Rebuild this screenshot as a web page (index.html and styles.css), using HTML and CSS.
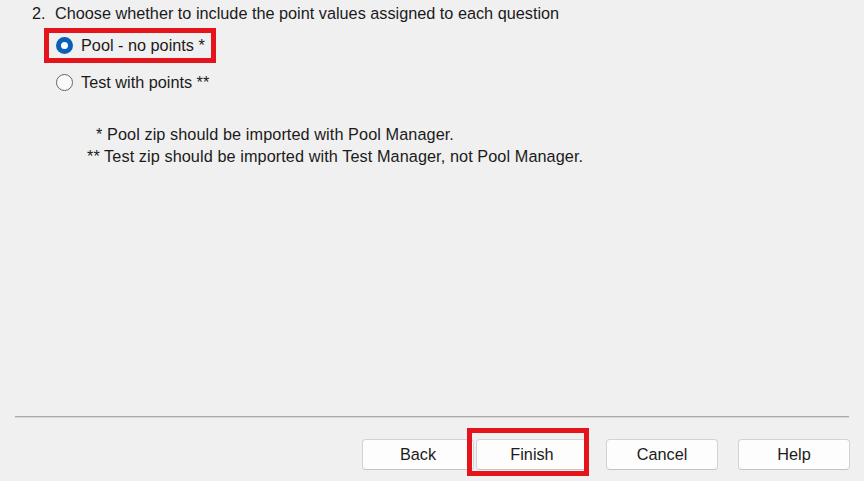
FILE: index.html
```html
<!DOCTYPE html>
<html lang="en">
<head>
<meta charset="utf-8">
<title>Export wizard</title>
<link rel="stylesheet" href="styles.css">
</head>
<body>
<div class="dialog">
  <div class="content">
    <div class="question"><span class="num">2.</span><span>Choose whether to include the point values assigned to each question</span></div>
    <div class="options">
      <label class="option highlighted"><span class="radio checked"></span><span>Pool - no points *</span></label>
      <label class="option"><span class="radio"></span><span>Test with points **</span></label>
    </div>
    <div class="notes">
      <div class="note note-one">* Pool zip should be imported with Pool Manager.</div>
      <div class="note note-two">** Test zip should be imported with Test Manager, not Pool Manager.</div>
    </div>
  </div>
  <div class="separator"></div>
  <div class="buttons">
    <button class="btn">Back</button>
    <button class="btn btn-finish">Finish<span class="mark"></span></button>
    <button class="btn btn-cancel">Cancel</button>
    <button class="btn btn-help">Help</button>
  </div>
</div>
</body>
</html>
```
FILE: styles.css
```css
html, body {
  margin: 0;
  padding: 0;
  background: #f0f0f0;
}
body {
  font-family: "Liberation Sans", Arial, sans-serif;
  font-size: 16.25px;
  color: #1b1b1b;
}
.dialog {
  height: 481px;
  display: flex;
  flex-direction: column;
}
.content {
  flex: 1;
  display: flex;
  flex-direction: column;
}
.question {
  display: flex;
  padding: 4px 0 0 32px;
  line-height: 19px;
}
.num {
  width: 23px;
}
.options {
  display: flex;
  flex-direction: column;
  align-items: flex-start;
  gap: 2px;
  margin: 5px 0 0 44px;
}
.option {
  display: flex;
  align-items: center;
  gap: 8px;
  height: 25px;
  padding: 0 6px 0 7px;
  border: 5px solid transparent;
  line-height: 19px;
}
.option.highlighted {
  border-color: #e3141b;
}
.radio {
  box-sizing: border-box;
  width: 17px;
  height: 17px;
  border-radius: 50%;
  border: 1.5px solid #646464;
  background: #fafafa;
}
.radio.checked {
  border: 5.5px solid #0860b8;
  background: #ffffff;
}
.notes {
  margin-top: 23px;
  line-height: 22px;
  letter-spacing: 0.08px;
}
.note-one {
  padding-left: 96px;
}
.note-two {
  padding-left: 87px;
}
.separator {
  margin: 0 15px;
  height: 1px;
  background: #a9a9a9;
  border-bottom: 1px solid #d9d9d9;
}
.buttons {
  display: flex;
  justify-content: flex-end;
  padding: 0 14px 0 0;
  margin: 21px 0 11px 0;
}
.btn {
  position: relative;
  box-sizing: border-box;
  width: 112px;
  height: 31px;
  background: #fdfdfd;
  border: 1px solid #d3d3d3;
  border-bottom-color: #c4c4c4;
  border-radius: 4px;
  font-family: inherit;
  font-size: 16.25px;
  color: #1b1b1b;
  padding: 0;
}
.btn-finish {
  margin-left: 2px;
}
.btn-cancel {
  margin-left: 18px;
}
.btn-help {
  margin-left: 20px;
}
.mark {
  position: absolute;
  left: -10px;
  right: -2px;
  top: -12px;
  bottom: -7px;
  border: 5px solid #e3141b;
  pointer-events: none;
}
```
